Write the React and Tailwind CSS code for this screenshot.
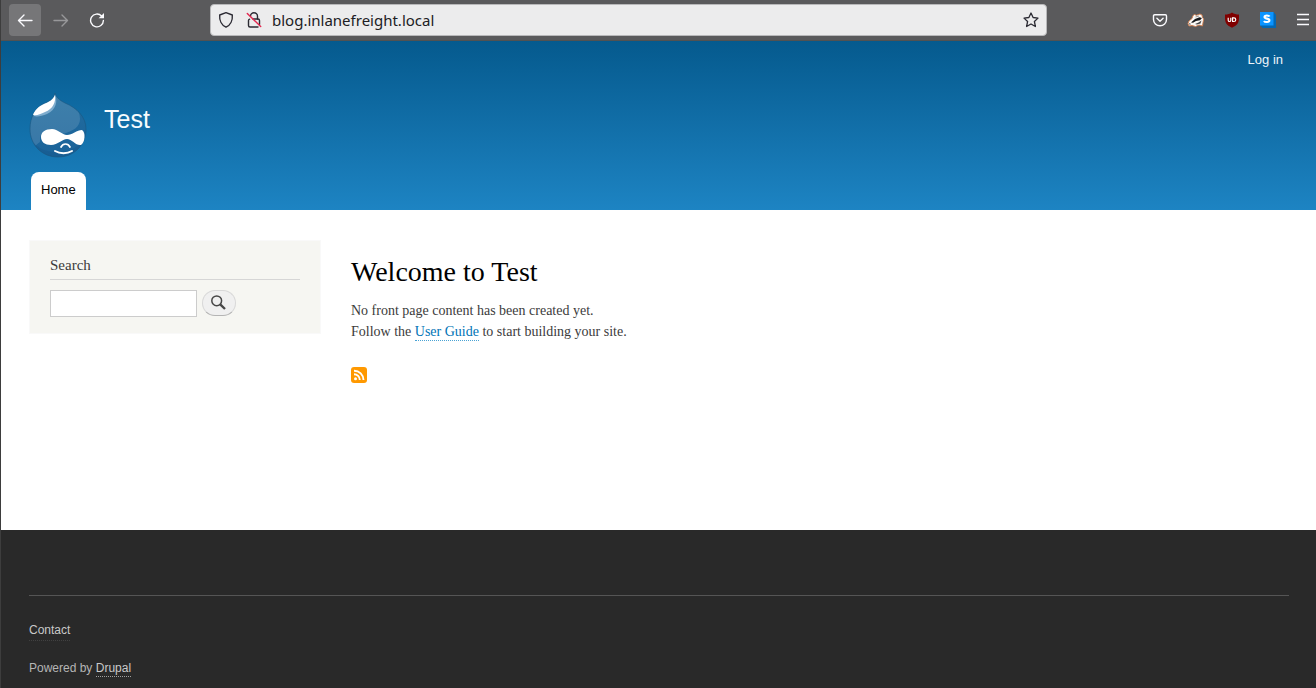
function ToolButton({ label, className = "", children }) {
  return (
    <button
      type="button"
      aria-label={label}
      className={`flex shrink-0 items-center justify-center rounded ${className}`}
    >
      {children}
    </button>
  );
}

function ArrowIcon({ className = "" }) {
  return (
    <svg width="16" height="16" viewBox="0 0 16 16" fill="none" stroke="currentColor" strokeWidth="1.4" strokeLinecap="round" strokeLinejoin="round" className={className}>
      <path d="M15 8.5H1.5M7 3L1.5 8.5L7 14" />
    </svg>
  );
}

function ReloadIcon() {
  return (
    <svg width="16" height="16" viewBox="0 0 16 16" fill="none" stroke="currentColor" strokeWidth="1.4">
      <path d="M12.6 4A6.4 6.4 0 1 0 14.4 8.5" strokeLinecap="round" />
      <path d="M15 1v5.2H9.6z" fill="currentColor" stroke="none" />
    </svg>
  );
}

function ShieldIcon() {
  return (
    <svg width="16" height="18" viewBox="0 0 16 18" fill="none" stroke="#2b2a33" strokeWidth="1.4" strokeLinejoin="round">
      <path d="M8 1.6L14.3 4C14.8 9.5 12.3 14.4 8 16.2C3.7 14.4 1.2 9.5 1.7 4z" />
    </svg>
  );
}

function InsecureIcon() {
  return (
    <svg width="16" height="18" viewBox="0 0 16 18" fill="none" stroke="#2b2a33" strokeWidth="1.4" strokeLinecap="round">
      <path d="M4.5 5.200a3.500 3.500 0 0 1 7 0V8" />
      <path d="M7 8H12a1.500 1.500 0 0 1 1.500 1.500v4" />
      <path d="M3.600 8.200a1.500 1.500 0 0 0-1.100 1.400v4.900A1.500 1.500 0 0 0 4 16h8" />
      <path d="M1.300 2.500L14.700 15.500" stroke="#e22850" />
    </svg>
  );
}

function StarIcon() {
  return (
    <svg width="16" height="16" viewBox="0 0 16 16" fill="none" stroke="#2b2a33" strokeWidth="1.3" strokeLinejoin="round">
      <path d="M8 1L10.100 5.500L15 6.100L11.400 9.500L12.400 14.500L8 12L3.600 14.500L4.600 9.500L1 6.100L5.900 5.500z" />
    </svg>
  );
}

function PocketIcon() {
  return (
    <svg width="16" height="16" viewBox="0 0 16 16" fill="none" stroke="#fbfbfe" strokeWidth="1.4" strokeLinecap="round" strokeLinejoin="round">
      <path d="M2.700 2.700h10.600a1.200 1.200 0 0 1 1.200 1.200v3.600a6.500 6.300 0 0 1-13 0V3.900a1.200 1.200 0 0 1 1.200-1.200z" />
      <path d="M4.900 6.300L8 9.300L11.100 6.300" />
    </svg>
  );
}

function BadgerIcon() {
  return (
    <svg width="18" height="16" viewBox="0 0 18 16">
      <path d="M1 11.500L2 9L5 6.500L6 3.500L7.500 2.500L9.500 3.300L13 2L15 3L15.500 5.500L16.700 7L16 10.500L15.500 14L12 13L8.500 14.500L5 13.500L2 14z" fill="#fbf9f6" stroke="#ce7c4c" strokeWidth=".9" />
      <path d="M4 10.500L8 7L12.500 5.300L15 6L13 8.300L9 9L6 10.800z" fill="#17191c" />
      <path d="M8 12L11.500 10.500L14.500 8.500L13.500 11.500L10 12.500z" fill="#44474a" />
      <path d="M1.700 11.500L3.500 11.500L3.200 13z" fill="#161616" />
      <path d="M8.500 5L12 4" stroke="#999" />
    </svg>
  );
}

function BlockerIcon() {
  return (
    <svg width="16" height="16" viewBox="0 0 16 16" fill="none">
      <path d="M8 .5C10 2 12.500 2.500 15 2.500V6C15 11 13 13.500 8 15.700C3 13.500 1 11 1 6V2.500C3.500 2.500 6 2 8 .5z" fill="#800000" />
      <path d="M4.200 5.800v2.400a1.300 1.300 0 0 0 2.600 0V5.800M8.600 5.800v3.700h1.300a1.850 1.850 0 0 0 0-3.700z" stroke="#fff" strokeWidth="1.2" />
    </svg>
  );
}

function ExtensionIcon() {
  return (
    <svg width="16" height="16" viewBox="0 0 16 16" fill="none">
      <path d="M0 13L2.500 16H16V3L13.500 0z" fill="#0567b2" />
      <path d="M0 0h13.500v13.500H0z" fill="#0b94ff" />
      <path d="M9.600 4.500C8.900 3.300 4.500 2.800 4.500 5C4.500 7.200 9.400 6 9.400 8.300C9.400 10.700 4.800 10.400 4 8.900" stroke="#fff" strokeWidth="2.1" />
    </svg>
  );
}

function MenuIcon() {
  return (
    <svg width="14" height="14" viewBox="0 0 14 14" stroke="#fbfbfe" strokeWidth="1.3">
      <path d="M1 1.500h12M1 6.500h12M1 11.500h12" />
    </svg>
  );
}

function BrowserToolbar() {
  return (
    <div className="flex h-[41px] items-center border-b border-[#525252] bg-[#5a5a5c] px-2">
      <div className="mr-[97px] flex gap-1 text-[#fbfbfe]">
        <ToolButton label="Back" className="size-8 bg-[#767678]"><ArrowIcon /></ToolButton>
        <ToolButton label="Forward" className="size-8 text-[#98989a]"><ArrowIcon className="-scale-x-100" /></ToolButton>
        <ToolButton label="Reload" className="size-8"><ReloadIcon /></ToolButton>
      </div>
      <div className="flex h-8 min-w-0 flex-1 items-center rounded border border-[#b8b8ba] bg-[#ececed] px-[7px]">
        <ShieldIcon />
        <span className="mr-2 ml-3"><InsecureIcon /></span>
        <input
          type="text"
          aria-label="Address"
          defaultValue="blog.inlanefreight.local"
          className="min-w-0 flex-1 bg-transparent px-0.5 font-['Noto_Sans',sans-serif] text-[15px] text-[#202024] outline-none"
        />
        <ToolButton label="Bookmark this page"><StarIcon /></ToolButton>
      </div>
      <div className="-mr-2 ml-[95px] flex items-center">
        <ToolButton label="Save to Pocket" className="size-9"><PocketIcon /></ToolButton>
        <ToolButton label="Privacy Badger" className="size-9"><BadgerIcon /></ToolButton>
        <ToolButton label="Content blocker" className="size-9"><BlockerIcon /></ToolButton>
        <ToolButton label="Extension" className="size-9"><ExtensionIcon /></ToolButton>
        <ToolButton label="Menu" className="h-9 w-[30px] pl-1"><MenuIcon /></ToolButton>
      </div>
    </div>
  );
}

function DropLogo() {
  return (
    <svg width="58" height="66" viewBox="0 0 58 66" aria-label="Home">
      <defs>
        <linearGradient id="dropShade" x1="0" y1="0" x2="0" y2="1">
          <stop offset="0" stopColor="#236d9f" />
          <stop offset="1" stopColor="#1a639a" />
        </linearGradient>
        <clipPath id="dropShape">
          <path d="M26 1C27 5 30 8 36 11C48 16 57 25 57 37C57 53 45 65 29 65C13 65 1 53 1 37C1 25 6 17 14 12C22 9 25 6 26 1z" />
        </clipPath>
      </defs>
      <g clipPath="url(#dropShape)">
        <path d="M0 0h58v66H0z" fill="url(#dropShade)" />
        <path d="M0 0H36C45 15 51 17 51 27C51 35 44 39 34 42C25 35 10 34 11 50C8 52 6 54 5 56L0 50z" fill="#fff" opacity=".13" />
        <path d="M1 47C10 58 18 60 29 60C42 60 51 54 57 43V66H0z" fill="#155a8e" opacity=".55" />
      </g>
      <path d="M26 1C27 5 30 8 36 11C48 16 57 25 57 37C57 53 45 65 29 65C13 65 1 53 1 37C1 25 6 17 14 12C22 9 25 6 26 1z" fill="none" stroke="#1b5680" strokeOpacity=".6" />
      <path d="M26 3C29 9 27 18 18 22C13 24 8 25 5 24C5 19 10 14 15 12C20 10 24 8 26 3z" fill="#7fadce" />
      <path d="M26 3C27 10 24 17 16 20C11 22 8 24 4 23C5 19 10 14 15 12C20 10 24 8 26 3z" fill="#fff" />
      <path d="M23 37C29 37 33 43 38 43C43 43 48 38 53 38C57 40 56 51 52 53C47 54 43 47 38 47C33 47 29 53 22 53C16 53 12 50 12 45C12 40 16 37 23 37z" fill="#fff" />
      <path d="M32 55C34 51 39 51 41 55" fill="none" stroke="#fff" strokeWidth="1.7" strokeLinecap="round" />
      <path d="M26 59C31 62 38 62 43 59" fill="none" stroke="#fff" strokeWidth="2" strokeLinecap="round" />
    </svg>
  );
}

function SiteHeader() {
  return (
    <header className="flex h-[169px] flex-col bg-linear-to-b from-[#055a8e] to-[#1d84c3] px-7 font-['Liberation_Sans',Arial,sans-serif]">
      <nav aria-label="User account" className="flex justify-end pt-[9px] pr-[5px]">
        <a href="#login" className="text-[13px] leading-5 text-[#edf5fa]">Log in</a>
      </nav>
      <div className="mt-[22px] flex items-start">
        <a href="#home" aria-label="Home" className="block"><DropLogo /></a>
        <a href="#home" className="mt-[11px] ml-[17px] text-[25px] leading-8 text-[#f7fbfd]">Test</a>
      </div>
      <nav aria-label="Main" className="mt-auto ml-0.5 flex">
        <a href="#home" className="rounded-t-lg bg-white px-2.5 pt-2 pb-2.5 text-[13px] leading-5 text-black">Home</a>
      </nav>
    </header>
  );
}

function SearchBlock() {
  return (
    <aside className="w-[292px] shrink-0 border border-[#f9f9f9] bg-[#f6f6f2] px-5 pt-[15px] pb-4">
      <h2 className="border-b border-[#d6d6d6] pb-[5px] text-[15px] leading-[18px]">
        <label htmlFor="keys">Search</label>
      </h2>
      <form className="mt-2.5 flex gap-[5px]" onSubmit={(e) => e.preventDefault()}>
        <input id="keys" type="search" className="h-[27px] w-[147px] border border-[#ccc] bg-white px-1 text-sm outline-none" />
        <button type="submit" aria-label="Search" className="flex h-[26px] w-[34px] items-center justify-center rounded-full border border-[#d8d8d8] border-b-[#b4b4b4] bg-[#f0f0f0]">
          <svg width="16" height="16" viewBox="0 0 16 16" fill="none" stroke="#474747">
            <circle cx="5.700" cy="5.800" r="4.900" strokeWidth="1.5" />
            <path d="M9.200 9.300L14 14" strokeWidth="2.4" />
          </svg>
        </button>
      </form>
    </aside>
  );
}

function FeedIcon() {
  return (
    <svg width="16" height="16" viewBox="0 0 16 16" fill="none">
      <rect width="16" height="16" rx="3" fill="#ff9900" />
      <circle cx="4.500" cy="11.800" r="1.500" fill="#fff" />
      <path d="M3 7.200a5.800 5.800 0 0 1 5.800 5.900M3 3.700a9.400 9.400 0 0 1 9.500 9.400" stroke="#fff" strokeWidth="1.9" />
    </svg>
  );
}

function MainContent() {
  return (
    <main className="min-w-0 flex-1 pt-[15px]">
      <h1 className="text-[28px] leading-[34px] text-black">Welcome to Test</h1>
      <div className="mt-[11px] text-sm leading-[21px]">
        <p>No front page content has been created yet.</p>
        <p>
          Follow the{" "}
          <a href="#guide" className="border-b border-dotted border-[#4aa3d4] pb-px text-[#0073b6]">User Guide</a>{" "}
          to start building your site.
        </p>
      </div>
      <a href="#feed" aria-label="Subscribe to feed" className="mt-[25px] inline-block"><FeedIcon /></a>
    </main>
  );
}

function SiteFooter() {
  return (
    <footer className="flex-1 bg-[#292929] pt-[65px] pr-[27px] pb-3 pl-7 font-['Liberation_Sans',Arial,sans-serif] text-xs leading-[18px] text-[#b5b5b5]">
      <div className="border-t border-[#555] pt-[25px]">
        <a href="#contact" className="inline-block border-b border-dotted border-[#414141] pb-px text-[#c8c8c8]">Contact</a>
        <p className="mt-[18px]">
          Powered by{" "}
          <a href="#drupal" className="border-b border-dotted border-[#a0a0a0] pb-px text-[#cacaca]">Drupal</a>
        </p>
      </div>
    </footer>
  );
}

export default function App() {
  return (
    <div className="flex min-h-screen flex-col border-l border-[#3d3d3d] bg-white">
      <BrowserToolbar />
      <SiteHeader />
      <div className="flex min-h-80 items-start gap-[30px] px-7 pt-[30px] font-['Liberation_Serif',serif] text-[#3b3b3b]">
        <SearchBlock />
        <MainContent />
      </div>
      <SiteFooter />
    </div>
  );
}
